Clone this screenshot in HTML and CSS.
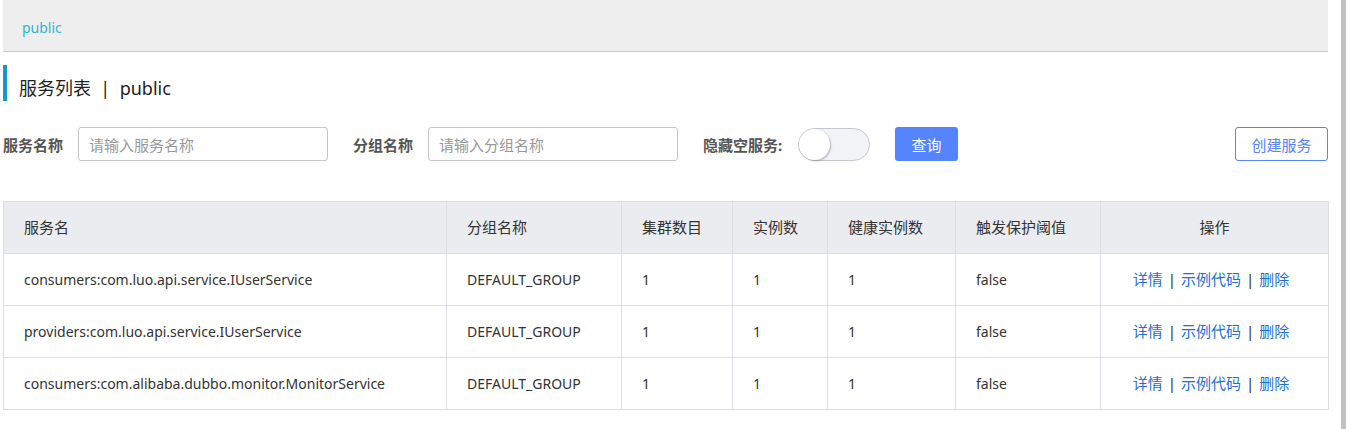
FILE: index.html
```html
<!DOCTYPE html>
<html>
<head>
<meta charset="utf-8">
<link rel="stylesheet" href="styles.css">
</head>
<body>
<div class="page">
  <div class="main">
    <div class="topbar"><span class="ns">public</span></div>
    <div class="title"><span class="title-text">服务列表&nbsp;&nbsp;|&nbsp;&nbsp;public</span></div>
    <div class="filters">
      <label class="flabel">服务名称</label>
      <div class="input"><span class="ph">请输入服务名称</span></div>
      <label class="flabel gap">分组名称</label>
      <div class="input"><span class="ph">请输入分组名称</span></div>
      <label class="flabel gap wide">隐藏空服务:</label>
      <div class="switch"><span class="knob"></span></div>
      <button class="btn primary">查询</button>
      <span class="spacer"></span>
      <button class="btn outline">创建服务</button>
    </div>
    <table class="grid">
      <colgroup>
        <col class="c1"><col class="c2"><col class="c3"><col class="c4"><col class="c5"><col class="c6"><col class="c7">
      </colgroup>
      <thead>
        <tr><th>服务名</th><th>分组名称</th><th>集群数目</th><th>实例数</th><th>健康实例数</th><th>触发保护阈值</th><th class="center">操作</th></tr>
      </thead>
      <tbody>
        <tr><td>consumers:com.luo.api.service.IUserService</td><td>DEFAULT_GROUP</td><td>1</td><td>1</td><td>1</td><td>false</td><td class="center ops"><a class="lnk">详情</a><span class="sep">|</span><a class="lnk">示例代码</a><span class="sep">|</span><a class="lnk">删除</a></td></tr>
        <tr><td>providers:com.luo.api.service.IUserService</td><td>DEFAULT_GROUP</td><td>1</td><td>1</td><td>1</td><td>false</td><td class="center ops"><a class="lnk">详情</a><span class="sep">|</span><a class="lnk">示例代码</a><span class="sep">|</span><a class="lnk">删除</a></td></tr>
        <tr><td>consumers:com.alibaba.dubbo.monitor.MonitorService</td><td>DEFAULT_GROUP</td><td>1</td><td>1</td><td>1</td><td>false</td><td class="center ops"><a class="lnk">详情</a><span class="sep">|</span><a class="lnk">示例代码</a><span class="sep">|</span><a class="lnk">删除</a></td></tr>
      </tbody>
    </table>
  </div>
  <div class="scrollbar"></div>
</div>
</body>
</html>
```
FILE: styles.css
```css
* { box-sizing: border-box; }
html, body { margin: 0; padding: 0; background: #fff; }
body {
  font-family: "Noto Sans", "Noto Sans CJK SC", sans-serif;
  font-size: 14px;
  color: #333;
  width: 1346px;
  height: 429px;
  overflow: hidden;
}
.page { display: flex; height: 429px; }
.main { width: 1325px; margin-left: 3px; flex: none; }
.scrollbar { width: 5px; margin-left: 13px; background: #c1c1c1; height: 429px; flex: none; }

.topbar {
  height: 52px;
  background: #eeeeee;
  border-bottom: 1px solid #cccccc;
  display: flex;
  align-items: center;
  padding-left: 19px;
}
.ns { color: #2cb8d4; font-size: 14px; padding-top: 3px; }

.title {
  margin-top: 13px;
  height: 36px;
  border-left: 4px solid #0f9ad6;
  display: flex;
  align-items: center;
  padding-left: 12px;
}
.title-text { font-size: 18px; color: #222; padding-top: 7px; }

.filters {
  margin-top: 26px;
  display: flex;
  align-items: center;
  height: 34px;
}
.flabel {
  font-weight: bold;
  color: #555;
  font-size: 15px;
  width: 75px;
  white-space: nowrap;
  flex: none;
}
.flabel.gap { margin-left: 25px; }
.flabel.wide { width: 95px; }
.input {
  width: 250px;
  height: 34px;
  border: 1px solid #c4c6cf;
  border-radius: 3px;
  display: flex;
  align-items: center;
  padding-left: 10px;
  flex: none;
}
.ph { color: #999; font-size: 15px; }
.switch {
  width: 72px;
  height: 33px;
  border: 1px solid #c4c6cf;
  border-radius: 17px;
  background: #f2f3f7;
  position: relative;
  flex: none;
}
.knob {
  position: absolute;
  left: 0;
  top: 0;
  width: 31px;
  height: 31px;
  border-radius: 50%;
  background: #fff;
  box-shadow: 1px 1px 2px rgba(0,0,0,0.25);
}
.btn {
  font-family: inherit;
  font-size: 15px;
  height: 34px;
  border-radius: 3px;
  cursor: pointer;
  flex: none;
}
.btn.primary {
  margin-left: 25px;
  width: 63px;
  background: #5584ff;
  color: #fff;
  border: none;
}
.spacer { flex: 1; }
.btn.outline {
  width: 93px;
  background: #fff;
  color: #5584ff;
  border: 1px solid #5584ff;
}

.grid {
  margin-top: 40px;
  width: 1325px;
  border-collapse: collapse;
  table-layout: fixed;
}
.c1 { width: 443px; }
.c2 { width: 175px; }
.c3 { width: 111px; }
.c4 { width: 95px; }
.c5 { width: 128px; }
.c6 { width: 145px; }
.c7 { width: 228px; }
.grid th, .grid td {
  border: 1px solid #dcdee3;
  height: 52px;
  padding: 0 0 0 20px;
  text-align: left;
  font-weight: normal;
  font-size: 14px;
  color: #333;
  white-space: nowrap;
}
.grid th { background: #ebecf0; font-size: 15px; padding-bottom: 2px; }
.grid .center { text-align: center; padding-left: 0; }
.grid .ops { font-size: 15px; padding-right: 7px; padding-bottom: 2px; }
.lnk { color: #1e6fd9; }
.sep { color: #333; margin: 0 5px; }
```
